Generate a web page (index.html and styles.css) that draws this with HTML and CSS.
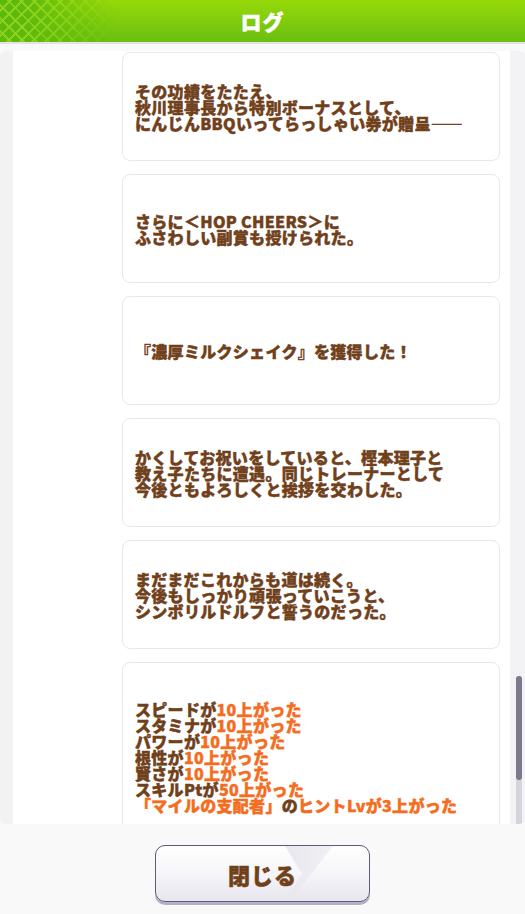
FILE: index.html
```html
<!DOCTYPE html>
<html lang="ja">
<head>
  <meta charset="UTF-8">
  <meta name="viewport" content="width=device-width, initial-scale=1.0">
  <title>ログ</title>
  <link rel="stylesheet" href="styles.css">
</head>
<body>
  <header class="header">
    <div class="header-pattern"></div>
    <h1 class="title">ログ</h1>
  </header>

  <main class="panel">
    <div class="panel-side"></div>
    <div class="log-list">
      <div class="log-card">
        <p>その功績をたたえ、<br>秋川理事長から特別ボーナスとして、<br>にんじんBBQいってらっしゃい券が贈呈――</p>
      </div>
      <div class="log-card">
        <p>さらに＜HOP CHEERS＞に<br>ふさわしい副賞も授けられた。</p>
      </div>
      <div class="log-card">
        <p>『濃厚ミルクシェイク』を獲得した！</p>
      </div>
      <div class="log-card">
        <p>かくしてお祝いをしていると、樫本理子と<br>教え子たちに遭遇。同じトレーナーとして<br>今後ともよろしくと挨拶を交わした。</p>
      </div>
      <div class="log-card">
        <p>まだまだこれからも道は続く。<br>今後もしっかり頑張っていこうと、<br>シンボリルドルフと誓うのだった。</p>
      </div>
      <div class="log-card log-card-result">
        <p>
          スピードが<span class="up">10上がった</span><br>
          スタミナが<span class="up">10上がった</span><br>
          パワーが<span class="up">10上がった</span><br>
          根性が<span class="up">10上がった</span><br>
          賢さが<span class="up">10上がった</span><br>
          スキルPtが<span class="up">50上がった</span><br>
          <span class="up">「マイルの支配者」</span>の<span class="up">ヒントLvが3上がった</span>
        </p>
      </div>
    </div>
    <div class="scrollbar">
      <div class="scroll-track">
        <div class="scroll-thumb"></div>
      </div>
    </div>
  </main>

  <footer class="footer">
    <button class="close-btn">
      <svg class="btn-deco" viewBox="0 0 213 55" preserveAspectRatio="none">
        <defs>
          <linearGradient id="deco" x1="0" y1="0" x2="1" y2="0">
            <stop offset="0" stop-color="#e9e7ee"/>
            <stop offset="1" stop-color="#f1f0f4"/>
          </linearGradient>
        </defs>
        <polygon points="129,0 177,0 134,55 129,55 146,28" fill="url(#deco)"/>
      </svg>
      <span class="btn-label">閉じる</span>
    </button>
  </footer>
</body>
</html>
```

FILE: styles.css
```css
body {
  margin: 0;
  width: 525px;
  height: 914px;
  overflow: hidden;
  background: #f9f9f9;
  font-family: "Noto Sans CJK JP", "Noto Sans", sans-serif;
}

.header {
  position: relative;
  height: 42px;
  display: flex;
  align-items: center;
  justify-content: center;
  background: linear-gradient(to bottom, #97d90a, #69bf10);
  border-bottom: 2px solid #e2e2e2;
  overflow: hidden;
}

/* diamond lattice in the top-left corner */
.header-pattern {
  position: absolute;
  left: 0;
  top: 0;
  width: 120px;
  height: 42px;
  background:
    repeating-linear-gradient(45deg, transparent 0 7px, rgba(140, 212, 30, 0.9) 7px 9px),
    repeating-linear-gradient(-45deg, transparent 0 7px, rgba(140, 212, 30, 0.9) 7px 9px),
    #5fb80c;
  -webkit-mask-image: linear-gradient(to right, #000 20%, transparent 95%);
  mask-image: linear-gradient(to right, #000 20%, transparent 95%);
}

.title {
  position: relative;
  margin: 0;
  color: #fff;
  font-size: 21px;
  font-weight: 900;
  letter-spacing: 1px;
  -webkit-text-stroke: 0.5px #fff;
}

.panel {
  display: flex;
  height: 773px;
  margin-top: 7px;
  background: #f2f2f2;
  border-radius: 6px;
  overflow: hidden;
}

.panel-side {
  width: 13px;
  flex: none;
}

.log-list {
  flex: 1;
  min-width: 0;
  background: #fff;
  padding: 1px 10px 0 109px;
  display: flex;
  flex-direction: column;
  gap: 13px;
  overflow: hidden;
}

.log-card {
  flex: none;
  min-height: 107px;
  display: flex;
  align-items: center;
  padding: 0 12px;
  border: 1px solid #e8e8e8;
  border-radius: 8px;
  background: #fff;
}

.log-card p {
  margin: 0;
  color: #70401b;
  font-size: 16px;
  font-weight: 900;
  line-height: 16px;
  letter-spacing: 0.3px;
  white-space: nowrap;
  -webkit-text-stroke: 0.45px currentColor;
}

.log-card-result {
  align-items: flex-start;
  padding-top: 38px;
  padding-bottom: 30px;
}

.up {
  color: #f46d1f;
}

.scrollbar {
  width: 15px;
  flex: none;
  background: #f3f3f5;
  padding: 11px 0 0 6px;
  box-sizing: border-box;
}

.scroll-track {
  width: 6px;
  height: 750px;
  border-radius: 3px;
  background: #d5d4db;
}

.scroll-thumb {
  width: 6px;
  height: 104px;
  margin-top: 614px;
  border-radius: 3px;
  background: #7b798b;
}

.footer {
  display: flex;
  justify-content: center;
  padding-top: 21px;
}

.close-btn {
  position: relative;
  width: 215px;
  height: 57px;
  padding: 0;
  border: 1.5px solid #5d5a7c;
  border-radius: 10px;
  background: linear-gradient(to bottom, #ffffff 0%, #f6f5f8 50%, #e8e6ee 100%);
  box-shadow: 0 3px 0 #b3b0c6;
  overflow: hidden;
  cursor: pointer;
  font-family: inherit;
}

.btn-deco {
  position: absolute;
  left: 0;
  top: 0;
  width: 100%;
  height: 100%;
}

.btn-label {
  position: relative;
  color: #70401b;
  font-size: 22px;
  font-weight: 900;
  letter-spacing: 1px;
  -webkit-text-stroke: 0.5px currentColor;
}
```
